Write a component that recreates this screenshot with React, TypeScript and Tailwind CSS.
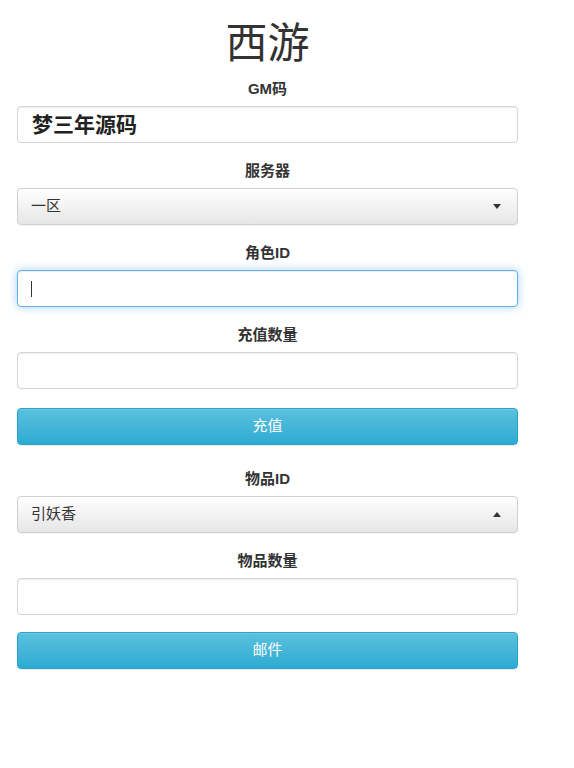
import React from "react";

const font = { fontFamily: '"Liberation Sans", "Noto Sans CJK SC", sans-serif' };

function Label({ children }: { children: React.ReactNode }) {
  return (
    <div className="h-5 mb-[7px] text-center text-[15px] leading-5 font-bold text-[#333]">
      {children}
    </div>
  );
}

function Input({ children, focused }: { children?: React.ReactNode; focused?: boolean }) {
  return (
    <div
      className={
        "h-[37px] w-full rounded-[4px] border bg-white flex items-center " +
        (focused
          ? "border-[#66afe9] shadow-[inset_0_1px_1px_rgba(0,0,0,0.075),0_0_8px_rgba(102,175,233,0.6)]"
          : "border-[#d4d4d4] shadow-[inset_0_1px_1px_rgba(0,0,0,0.075)]")
      }
    >
      {children}
    </div>
  );
}

function Select({ value, up }: { value: string; up?: boolean }) {
  return (
    <div className="h-[37px] w-full rounded-[4px] border border-[#d0d0d0] bg-gradient-to-b from-white to-[#e6e6e6] shadow-[0_1px_1px_rgba(0,0,0,0.06)] flex items-center justify-between pl-[13px] pr-[16px]">
      <span className="text-[15px] text-[#333]">{value}</span>
      <svg width="8" height="5" viewBox="0 0 8 5" className="block">
        {up ? <polygon points="0,5 8,5 4,0" fill="#333" /> : <polygon points="0,0 8,0 4,5" fill="#333" />}
      </svg>
    </div>
  );
}

function Button({ children }: { children: React.ReactNode }) {
  return (
    <div className="h-[37px] w-full rounded-[4px] border border-[#28a4c9] bg-gradient-to-b from-[#5bc0de] to-[#2aabd2] flex items-center justify-center text-[15px] text-white shadow-[inset_0_1px_0_rgba(255,255,255,0.15),0_1px_1px_rgba(0,0,0,0.075)]">
      {children}
    </div>
  );
}

export default function App() {
  return (
    <div className="min-h-[768px] w-[574px] bg-white" style={font}>
      <div className="ml-[17px] w-[501px] pt-[21px]">
        <div className="text-center text-[42px] leading-[46px] text-[#333] mb-[12px]">西游</div>

        <Label>GM码</Label>
        <div className="mb-[18px]">
          <Input>
            <span className="pl-[14px] text-[21px] font-bold text-[#222]">梦三年源码</span>
          </Input>
        </div>

        <Label>服务器</Label>
        <div className="mb-[18px]">
          <Select value="一区" />
        </div>

        <Label>角色ID</Label>
        <div className="mb-[18px]">
          <Input focused>
            <span className="ml-[13px] block w-px h-[16px] bg-[#333]" />
          </Input>
        </div>

        <Label>充值数量</Label>
        <div className="mb-[19px]">
          <Input />
        </div>

        <div className="mb-[24px]">
          <Button>充值</Button>
        </div>

        <Label>物品ID</Label>
        <div className="mb-[18px]">
          <Select value="引妖香" up />
        </div>

        <Label>物品数量</Label>
        <div className="mb-[17px]">
          <Input />
        </div>

        <Button>邮件</Button>
      </div>
    </div>
  );
}
